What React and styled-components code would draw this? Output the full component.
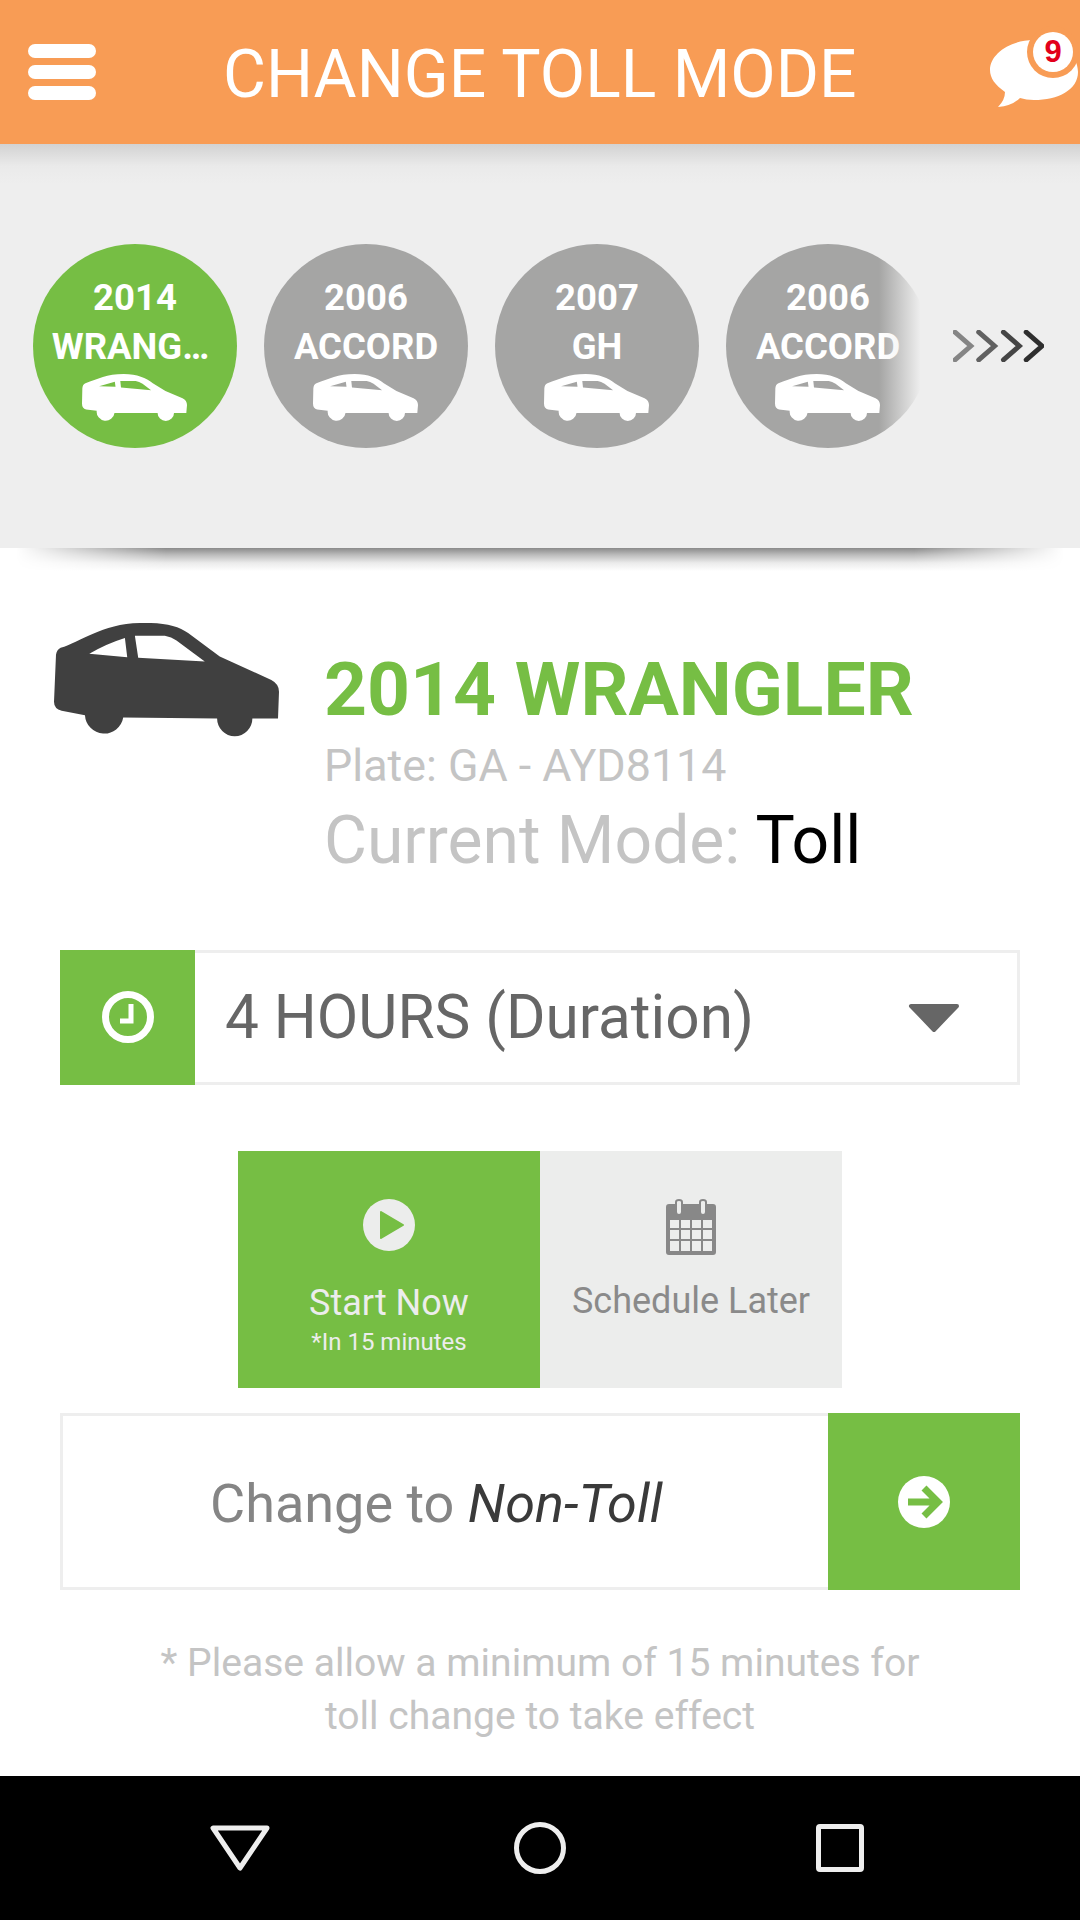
import React from 'react';
import styled, { createGlobalStyle } from 'styled-components';

const GREEN = '#76be44';

const vehicles = [
  { year: '2014', name: 'WRANG…\u00a0', active: true },
  { year: '2006', name: 'ACCORD' },
  { year: '2007', name: 'GH' },
  { year: '2006', name: 'ACCORD' },
];

const BigCarIcon = ({ className }) => (
  <svg className={className} viewBox="72 70 676 340" preserveAspectRatio="none">
    <path
      fillRule="evenodd"
      d="M92 144 C150 128 215 72 330 70 C400 68 445 78 475 100 L570 170 L725 240 Q748 252 748 275 L745 355 L668 355 A53 53 0 0 1 562 355 L280 352 A58 58 0 0 1 165 345 L95 332 Q72 326 72 305 L78 165 Q80 150 92 144 Z M178 162 Q230 132 285 115 L292 172 Z M315 108 L405 108 Q425 112 440 122 L525 185 L325 174 Z"
    />
  </svg>
);

const SmallCarIcon = ({ className }) => (
  <svg className={className} viewBox="238 463 307 139" preserveAspectRatio="none">
    <path
      fillRule="evenodd"
      d="M248 490 C285 478 310 463 360 463 C400 463 425 475 445 490 L482 513 L532 535 Q545 542 545 555 L543 578 L507 578 A24 24 0 0 1 459 578 L333 578 A26 26 0 0 1 281 572 L250 568 Q238 565 238 550 L239 505 Q240 493 248 490 Z M288 499 L334 486 L336 501 Z M350 484 L395 484 Q405 486 415 492 L440 511 L352 503 Z"
    />
  </svg>
);

const App = () => (
  <Page>
    <GlobalStyle />
    <Header>
      <Burger>
        <span />
        <span />
        <span />
      </Burger>
      <Title>CHANGE TOLL MODE</Title>
      <Messages>
        <svg viewBox="0 0 90 70" width="90" height="70">
          <path
            fill="#fff"
            d="M44 0 C70 0 88 14 88 32 C88 50 68 60 44 60 Q36 60 30 58 Q22 66 8 67 Q15 60 15 52 C5 45 0 38 0 30 C0 14 20 0 44 0 Z"
          />
        </svg>
        <Badge>9</Badge>
      </Messages>
    </Header>

    <Strip>
      <Carousel>
        {vehicles.map((v, i) => (
          <Bubble key={i} $active={v.active}>
            <span>{v.year}</span>
            <BubbleName>{v.name}</BubbleName>
            <BubbleCar />
          </Bubble>
        ))}
      </Carousel>
      <Chevrons viewBox="0 0 92 32" width="91" height="32">
        <polyline points="2,2 18,16 2,30" stroke="#858585" />
        <polyline points="26,2 42,16 26,30" stroke="#616161" />
        <polyline points="51,2 67,16 51,30" stroke="#454545" />
        <polyline points="74,2 90,16 74,30" stroke="#2e2e2e" />
      </Chevrons>
    </Strip>

    <Vehicle>
      <BigCar />
      <VehicleInfo>
        <VehicleName>2014 WRANGLER</VehicleName>
        <Plate>Plate: GA - AYD8114</Plate>
        <Mode>
          Current Mode: <b>Toll</b>
        </Mode>
      </VehicleInfo>
    </Vehicle>

    <Select>
      <SelectIcon>
        <svg viewBox="0 0 52 52" width="52" height="52">
          <circle cx="26" cy="26" r="22.5" fill="none" stroke="#fff" strokeWidth="7" />
          <path d="M29 13 V30 H18" fill="none" stroke="#fff" strokeWidth="5" />
        </svg>
      </SelectIcon>
      <SelectBody>
        <SelectText>4 HOURS (Duration)</SelectText>
        <svg viewBox="0 0 52 30" width="52" height="30">
          <path fill="#666" stroke="#666" strokeWidth="4" strokeLinejoin="round" d="M3 3 H49 L26 27 Z" />
        </svg>
      </SelectBody>
    </Select>

    <Tabs>
      <Tab $active>
        <svg viewBox="0 0 52 52" width="52" height="52">
          <circle cx="26" cy="26" r="26" fill="#ecedec" />
          <path fill={GREEN} stroke={GREEN} strokeWidth="2" strokeLinejoin="round" d="M18 13 L40 26 L18 39 Z" />
        </svg>
        <TabLabel>Start Now</TabLabel>
        <TabHint>*In 15 minutes</TabHint>
      </Tab>
      <Tab>
        <svg viewBox="0 0 50 56" width="50" height="56">
          <path
            fill="#888"
            fillRule="evenodd"
            d="M3 5 H9 V3 Q9 0 13 0 Q17 0 17 3 V5 H33 V3 Q33 0 37 0 Q41 0 41 3 V5 H47 Q50 5 50 8 V53 Q50 56 47 56 H3 Q0 56 0 53 V8 Q0 5 3 5 Z M11 3 V13 Q11 15 13 15 Q15 15 15 13 V3 Q15 2 13 2 Q11 2 11 3 Z M35 3 V13 Q35 15 37 15 Q39 15 39 13 V3 Q39 2 37 2 Q35 2 35 3 Z M4 21 V29 H13 V21 Z M15 21 V29 H24 V21 Z M26 21 V29 H35 V21 Z M37 21 V29 H46 V21 Z M4 31 V40 H13 V31 Z M15 31 V40 H24 V31 Z M26 31 V40 H35 V31 Z M37 31 V40 H46 V31 Z M4 42 V52 H13 V42 Z M15 42 V52 H24 V42 Z M26 42 V52 H35 V42 Z M37 42 V52 H46 V42 Z"
          />
        </svg>
        <TabLabel $muted>Schedule Later</TabLabel>
      </Tab>
    </Tabs>

    <Change>
      <ChangeText>
        Change to <em>Non-Toll</em>
      </ChangeText>
      <ChangeButton>
        <svg viewBox="0 0 52 52" width="52" height="52">
          <circle cx="26" cy="26" r="26" fill="#fff" />
          <path d="M26 12 L40 26 L26 40 M39 26 H10" fill="none" stroke={GREEN} strokeWidth="7" />
        </svg>
      </ChangeButton>
    </Change>

    <Note>
      * Please allow a minimum of 15 minutes for
      <br />
      toll change to take effect
    </Note>

    <NavBar>
      <svg viewBox="0 0 60 46" width="60" height="46">
        <path d="M3 3 H57 L30 43 Z" fill="none" stroke="#eee" strokeWidth="5" strokeLinejoin="round" />
      </svg>
      <svg viewBox="0 0 52 52" width="52" height="52">
        <circle cx="26" cy="26" r="23.5" fill="none" stroke="#eee" strokeWidth="5" />
      </svg>
      <NavSquare />
    </NavBar>
  </Page>
);

const GlobalStyle = createGlobalStyle`
  html, body {
    margin: 0;
    padding: 0;
    background: #fff;
  }
  * {
    box-sizing: border-box;
  }
`;

const Page = styled.div`
  width: 1080px;
  height: 1920px;
  display: flex;
  flex-direction: column;
  overflow: hidden;
  font-family: Roboto, sans-serif;
`;

const Header = styled.header`
  height: 144px;
  flex: none;
  display: flex;
  align-items: center;
  padding-left: 28px;
  background: #f89c55;
  color: #fff;
  position: relative;
  z-index: 2;
`;

const Burger = styled.div`
  width: 68px;
  display: flex;
  flex-direction: column;
  gap: 7px;
  span {
    height: 14px;
    border-radius: 7px;
    background: #fff;
  }
`;

const Title = styled.h1`
  margin: 5px 0 0 127px;
  font-size: 66px;
  font-weight: 400;
  white-space: nowrap;
`;

const Messages = styled.div`
  margin-left: auto;
  width: 90px;
  height: 70px;
  position: relative;
  top: 3px;
  svg {
    display: block;
  }
`;

const Badge = styled.div`
  position: absolute;
  top: -8px;
  left: 43px;
  width: 40px;
  height: 40px;
  border-radius: 50%;
  background: #fff;
  box-shadow: 0 0 0 6px #f89c55;
  color: #e2001a;
  font-family: 'Liberation Sans', sans-serif;
  font-size: 31px;
  font-weight: 700;
  line-height: 40px;
  text-align: center;
`;

const Strip = styled.section`
  height: 404px;
  flex: none;
  display: flex;
  align-items: flex-start;
  padding: 100px 0 0 33px;
  position: relative;
  background: linear-gradient(#d2d2d2, #eaeaea 22px, #eeeeee 40px);
  &::after {
    content: '';
    position: absolute;
    left: 16px;
    right: 16px;
    top: 100%;
    height: 23px;
    background: linear-gradient(#8a8a8a, #bcbcbc 30%, #ebebeb 65%, #ffffff);
    mask-image: linear-gradient(to right, transparent, #000 150px, #000 calc(100% - 150px), transparent);
  }
`;

const Carousel = styled.div`
  width: 892px;
  flex: none;
  display: flex;
  gap: 27px;
  overflow: hidden;
  position: relative;
  &::after {
    content: '';
    position: absolute;
    top: 0;
    right: 0;
    bottom: 0;
    width: 46px;
    background: linear-gradient(to right, rgba(238, 238, 238, 0), #eeeeee 90%);
  }
`;

const Bubble = styled.div`
  width: 204px;
  height: 204px;
  flex: none;
  display: flex;
  flex-direction: column;
  align-items: center;
  padding-top: 29px;
  border-radius: 50%;
  background: ${(p) => (p.$active ? GREEN : '#a5a5a4')};
  color: #fff;
  font-size: 36.5px;
  font-weight: 700;
  line-height: 49px;
`;

const BubbleName = styled.span`
  white-space: nowrap;
`;

const BubbleCar = styled(SmallCarIcon)`
  width: 105px;
  height: 47px;
  margin: 3px 2px 0 0;
  fill: #fff;
  flex: none;
`;

const Chevrons = styled.svg`
  margin: 86px 0 0 28px;
  flex: none;
  polyline {
    fill: none;
    stroke-width: 5;
    stroke-linecap: round;
  }
`;

const Vehicle = styled.section`
  flex: none;
  display: flex;
  padding: 75px 0 0 54px;
`;

const BigCar = styled(BigCarIcon)`
  width: 225px;
  height: 114px;
  flex: none;
  fill: #404040;
`;

const VehicleInfo = styled.div`
  margin-left: 45px;
  padding-top: 22px;
`;

const VehicleName = styled.div`
  color: ${GREEN};
  font-size: 75px;
  font-weight: 700;
  line-height: 88px;
`;

const Plate = styled.div`
  margin-top: 7px;
  color: #c4c4c4;
  font-size: 44.8px;
  line-height: 52px;
`;

const Mode = styled.div`
  margin-top: 10px;
  color: #c4c4c4;
  font-size: 66px;
  line-height: 78px;
  b {
    color: #000;
    font-weight: 400;
  }
`;

const Select = styled.section`
  height: 135px;
  margin: 70px 60px 0;
  flex: none;
  display: flex;
`;

const SelectIcon = styled.div`
  width: 135px;
  flex: none;
  display: flex;
  align-items: center;
  justify-content: center;
  padding-bottom: 2px;
  background: ${GREEN};
`;

const SelectBody = styled.div`
  flex: 1;
  display: flex;
  align-items: center;
  justify-content: space-between;
  padding: 0 57px 0 30px;
  border: 3px solid #eeeeee;
  border-left: 0;
`;

const SelectText = styled.div`
  color: #666;
  font-size: 60.3px;
`;

const Tabs = styled.section`
  margin-top: 66px;
  flex: none;
  display: flex;
  justify-content: center;
`;

const Tab = styled.div`
  width: 302px;
  height: 237px;
  display: flex;
  flex-direction: column;
  align-items: center;
  padding-top: 48px;
  background: ${(p) => (p.$active ? GREEN : '#ecedec')};
`;

const TabLabel = styled.div`
  margin-top: ${(p) => (p.$muted ? '25px' : '31px')};
  color: ${(p) => (p.$muted ? '#8a8a8a' : '#ecedec')};
  font-size: 36px;
  line-height: 42px;
`;

const TabHint = styled.div`
  margin-top: 2px;
  color: #ecedec;
  font-size: 24px;
  line-height: 32px;
`;

const Change = styled.section`
  height: 177px;
  margin: 25px 60px 0;
  flex: none;
  display: flex;
`;

const ChangeText = styled.div`
  flex: 1;
  display: flex;
  align-items: center;
  padding-left: 147px;
  padding-top: 3px;
  border: 3px solid #eeeeee;
  border-right: 0;
  color: #858585;
  font-size: 54px;
  white-space: pre;
  em {
    color: #3a3a3a;
    font-style: italic;
  }
`;

const ChangeButton = styled.div`
  width: 192px;
  flex: none;
  display: flex;
  align-items: center;
  justify-content: center;
  background: ${GREEN};
`;

const Note = styled.p`
  margin: 47px 0 0;
  flex: none;
  color: #c4c4c4;
  font-size: 39.1px;
  line-height: 53px;
  text-align: center;
`;

const NavBar = styled.nav`
  margin-top: auto;
  height: 144px;
  flex: none;
  display: flex;
  align-items: center;
  padding-left: 210px;
  background: #000;
  svg:first-child {
    margin-right: 244px;
  }
  svg:nth-child(2) {
    margin-right: 250px;
  }
`;

const NavSquare = styled.div`
  width: 48px;
  height: 48px;
  border: 5px solid #eee;
  border-radius: 4px;
`;

export default App;
